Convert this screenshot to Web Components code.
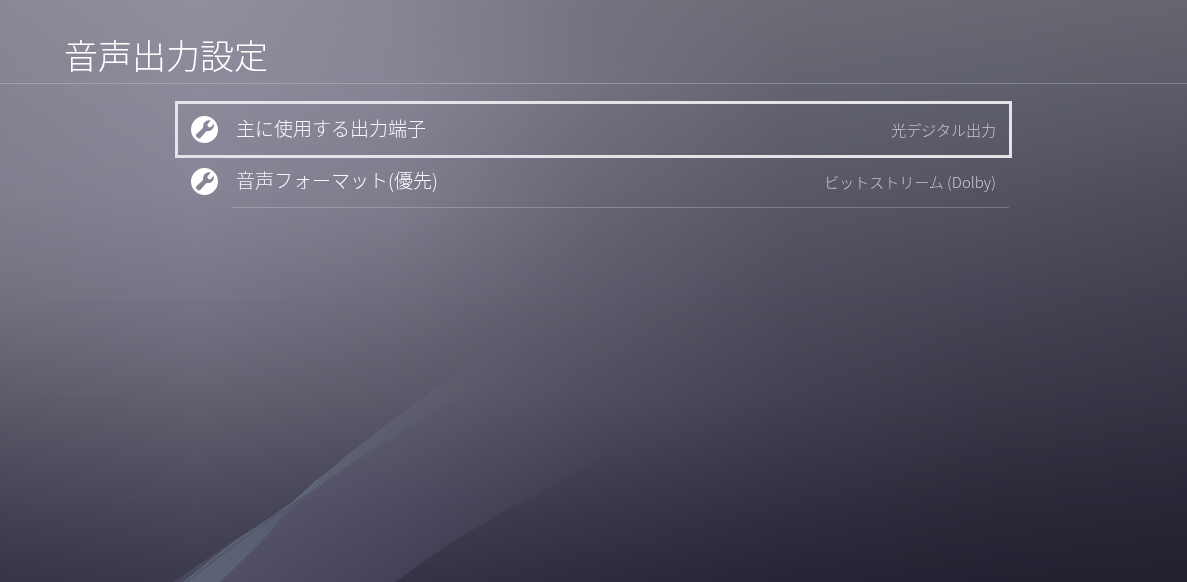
<!DOCTYPE html>
<html lang="ja">
<head>
<meta charset="utf-8">
<meta name="viewport" content="width=device-width, initial-scale=1">
<title>音声出力設定</title>
<style>
  html { background: #4a4858; }
  body { margin: 0; font-family: "Noto Sans CJK JP", "Noto Sans", sans-serif; font-weight: 300; color: #fff; }
</style>
</head>
<body>
<settings-screen>
  <screen-header slot="header">音声出力設定</screen-header>
  <setting-row selected value="光デジタル出力">主に使用する出力端子</setting-row>
  <setting-row value="ビットストリーム (Dolby)">音声フォーマット(優先)</setting-row>
</settings-screen>
<script>
/* Soft wallpaper: horizontal colour bands, each fading into the next one down. */
class WaveBackground extends HTMLElement {
  connectedCallback() {
    const bands = [
      [0,   '#898894 #908f9d #878693 #74737f #6c6c77 #696974 #666570'],
      [14,  '#858493 #8c8b9b #868595 #737280 #646470 #60616d #5d5c68'],
      [34,  '#7f7e8e #858495 #7e7d8d #676675 #585766 #545261 #4d4b5a'],
      [51,  '#727180 #767587 #6d6c7c #5c5b6b #4e4c5c #474555 #413f4f'],
      [69,  '#5b5a69 #62606f #5a5969 #4f4d5e #424051 #3a3848 #353343'],
      [86,  '#464456 #4b495b #454357 #3b394c #323041 #2c2a3a #292737'],
      [100, '#363446 #3b394c #353347 #2d2b3d #262435 #232131 #22202f']
    ];
    const layers = bands.map(([y, c], i) => {
      const mask = i ? `mask-image:linear-gradient(transparent ${bands[i - 1][0]}%,#000 ${y}%);` : '';
      return `<div style="background:linear-gradient(90deg,${c.split(' ').join(',')});${mask}"></div>`;
    }).join('');
    this.attachShadow({ mode: 'open' }).innerHTML = `
      <style>
        :host { position: fixed; inset: 0; z-index: -1; display: block; overflow: hidden; }
        div, svg { position: absolute; inset: 0; width: 100%; height: 100%; }
      </style>
      ${layers}
      <svg viewBox="0 0 1187 582" preserveAspectRatio="none" aria-hidden="true">
        <defs>
          <linearGradient id="upper" gradientUnits="userSpaceOnUse" x1="270" y1="522" x2="530" y2="345">
            <stop offset="0" stop-color="#71909a" stop-opacity=".5"/>
            <stop offset=".4" stop-color="#7b8594" stop-opacity=".26"/>
            <stop offset=".7" stop-color="#77778a" stop-opacity=".12"/>
            <stop offset="1" stop-color="#77778a" stop-opacity="0"/>
          </linearGradient>
          <linearGradient id="lower" gradientUnits="userSpaceOnUse" x1="300" y1="505" x2="200" y2="582">
            <stop offset="0" stop-color="#64808b" stop-opacity=".1"/>
            <stop offset=".4" stop-color="#64808b" stop-opacity=".32"/>
            <stop offset="1" stop-color="#6e8090" stop-opacity=".4"/>
          </linearGradient>
          <linearGradient id="broad" gradientUnits="userSpaceOnUse" x1="230" y1="560" x2="600" y2="400">
            <stop offset="0" stop-color="#706f8c" stop-opacity=".4"/>
            <stop offset=".45" stop-color="#706f8c" stop-opacity=".2"/>
            <stop offset="1" stop-color="#6c6a84" stop-opacity="0"/>
          </linearGradient>
        </defs>
        <path fill="url(#broad)" d="M187 582 Q240 542 293 503 L323 483 L357 460 L400 433 L433 413 L470 393 L510 378 L640 330 L700 405 Q610 450 550 487 L510 508 L450 543 L395 582Z"/>
        <path fill="url(#upper)" d="M273 517 L293 502 L317 480 L350 453 L383 427 L417 402 L440 385 L560 310 L610 340 L510 378 L470 393 L433 413 L400 433 L357 460 L323 483 L293 503Z"/>
        <path fill="#6f7890" fill-opacity=".25" d="M173 582 L233 541 L273 517 L183 582Z"/>
        <path fill="url(#lower)" d="M183 582 L233 543 L273 516 L300 496 L330 478 L283 517 L260 543 L220 582Z"/>
        <path fill="none" stroke="#8ca4b2" stroke-opacity=".3" d="M184 582 L233 543 L273 516 L293 502 L317 480"/>
      </svg>`;
  }
}

class ScreenHeader extends HTMLElement {
  connectedCallback() {
    this.attachShadow({ mode: 'open' }).innerHTML = `
      <style>
        :host { display: block; padding: 30px 64px 3px; border-bottom: 1px solid rgba(255,255,255,.24); }
        h1 { margin: 0; font-size: 34px; line-height: 50px; font-weight: inherit; white-space: nowrap; }
      </style>
      <h1><slot></slot></h1>`;
  }
}

class WrenchIcon extends HTMLElement {
  connectedCallback() {
    this.attachShadow({ mode: 'open' }).innerHTML = `
      <style>
        :host { display: block; flex: none; width: 27px; height: 27px; }
        svg { display: block; width: 100%; height: 100%; }
      </style>
      <svg viewBox="0 0 27 27" aria-hidden="true">
        <path fill="#fff" fill-rule="evenodd" d="M13.5 0a13.5 13.5 0 1 1 0 27a13.5 13.5 0 0 1 0-27Z
          M19.7 4.5C16.2 3.7 12.3 6 12.2 9.8C12.2 11.5 11.8 12.4 10.8 13.3L5.6 18C4.7 18.9 4.8 20 5.6 20.9L6.8 22C7.6 22.7 8.7 22.6 9.5 21.8L14.1 16.5C15 15.5 15.8 15.2 17.2 15.1C21 14.8 23.5 11.8 22.8 7.7L20.1 10.8C19.1 11.7 18 11.6 17.2 10.8C16.2 9.9 16.2 8.8 17 7.8Z"/>
      </svg>`;
  }
}

class SettingRow extends HTMLElement {
  connectedCallback() {
    this.attachShadow({ mode: 'open' }).innerHTML = `
      <style>
        :host { display: block; }
        button {
          box-sizing: border-box; display: flex; align-items: center; gap: 18px;
          width: 100%; min-height: 51px; margin: 0; padding: 0 13px; border: 0;
          background: none; color: inherit; font: inherit; text-align: left; cursor: pointer;
        }
        .label { flex: 1; font-size: 19px; line-height: 28px; padding-bottom: 4px; color: #f8f8fc; }
        .value { font-size: 15px; line-height: 22px; color: #c8c7d0; }
        .line { height: 1px; margin-left: 53px; background: rgba(255,255,255,.22); }
        :host([selected]) button { outline: 3px solid #e4e3e9; }
        :host([selected]) .line { background: none; }
      </style>
      <button type="button">
        <wrench-icon></wrench-icon>
        <span class="label"><slot></slot></span>
        <span class="value"></span>
      </button>
      <div class="line"></div>`;
    this.shadowRoot.querySelector('.value').textContent = this.getAttribute('value');
  }
}

class SettingsScreen extends HTMLElement {
  connectedCallback() {
    this.attachShadow({ mode: 'open' }).innerHTML = `
      <style>
        :host { display: block; }
        main { padding: 20px 15%; }
      </style>
      <wave-background></wave-background>
      <slot name="header"></slot>
      <main><slot></slot></main>`;
  }
}

customElements.define('wave-background', WaveBackground);
customElements.define('screen-header', ScreenHeader);
customElements.define('wrench-icon', WrenchIcon);
customElements.define('setting-row', SettingRow);
customElements.define('settings-screen', SettingsScreen);
</script>
</body>
</html>
